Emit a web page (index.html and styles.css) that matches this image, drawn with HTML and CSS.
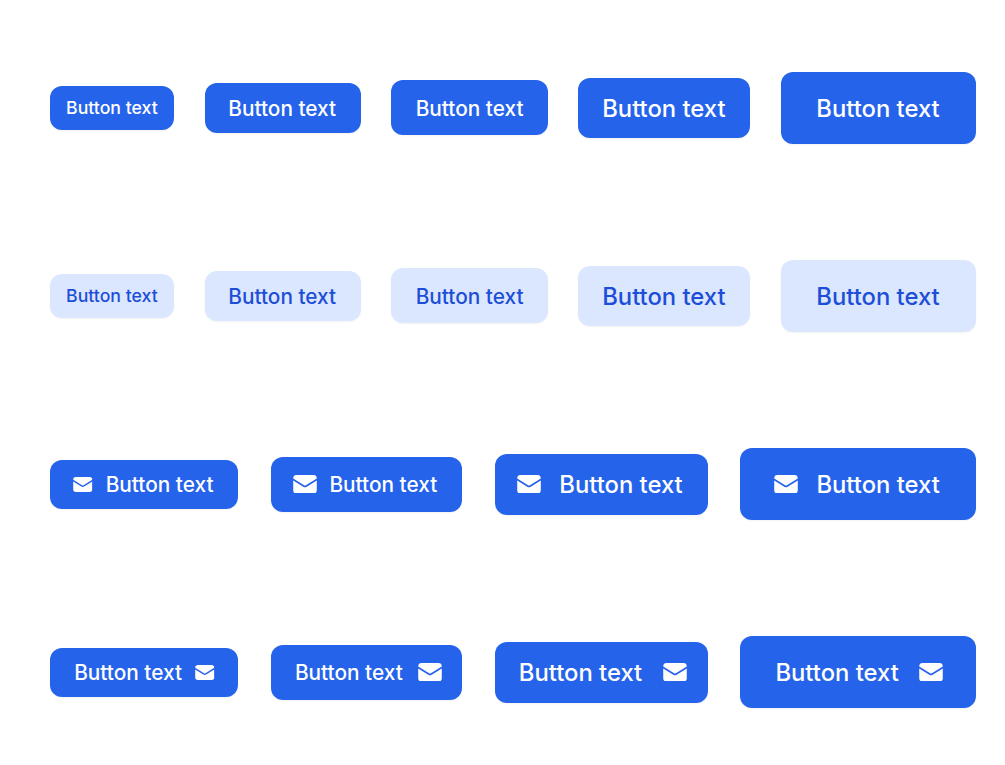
FILE: index.html
```html
<!DOCTYPE html>
<html lang="en">
<head>
  <meta charset="UTF-8" />
  <title>Buttons</title>
  <link rel="stylesheet" href="styles.css">
</head>
<body>
  <svg class="defs" width="0" height="0" aria-hidden="true">
    <symbol id="mail" viewBox="1.5 3.75 21 16.5">
      <path d="M1.5 8.67v8.58a3 3 0 003 3h15a3 3 0 003-3V8.67l-8.928 5.493a3 3 0 01-3.144 0L1.5 8.67z"/>
      <path d="M22.5 6.908V6.75a3 3 0 00-3-3h-15a3 3 0 00-3 3v.158l9.714 5.978a1.5 1.5 0 001.572 0L22.5 6.908z"/>
    </symbol>
  </svg>

  <div class="row">
    <button class="btn xs">Button text</button>
    <button class="btn sm">Button text</button>
    <button class="btn md">Button text</button>
    <button class="btn lg">Button text</button>
    <button class="btn xl">Button text</button>
  </div>

  <div class="row">
    <button class="btn soft xs">Button text</button>
    <button class="btn soft sm">Button text</button>
    <button class="btn soft md">Button text</button>
    <button class="btn soft lg">Button text</button>
    <button class="btn soft xl">Button text</button>
  </div>

  <div class="row lead">
    <button class="btn icon-sm"><svg class="icon small"><use href="#mail"/></svg>Button text</button>
    <button class="btn icon-md"><svg class="icon"><use href="#mail"/></svg>Button text</button>
    <button class="btn icon-lg"><svg class="icon"><use href="#mail"/></svg>Button text</button>
    <button class="btn icon-xl"><svg class="icon"><use href="#mail"/></svg>Button text</button>
  </div>

  <div class="row trail">
    <button class="btn icon-sm">Button text<svg class="icon small"><use href="#mail"/></svg></button>
    <button class="btn icon-md">Button text<svg class="icon"><use href="#mail"/></svg></button>
    <button class="btn icon-lg">Button text<svg class="icon"><use href="#mail"/></svg></button>
    <button class="btn icon-xl">Button text<svg class="icon"><use href="#mail"/></svg></button>
  </div>
</body>
</html>
```

FILE: styles.css
```css
html, body { margin: 0; padding: 0; background: white; }
body {
  height: 765px; box-sizing: border-box;
  padding: 72px 29px 0 49.6px;
  display: flex; flex-direction: column; gap: 116px;
  font-family: Inter, sans-serif; overflow: hidden;
}
.defs { position: absolute; }
.row {
  height: 72px;
  display: flex; align-items: center; justify-content: space-between;
}
.btn {
  display: flex; align-items: center; justify-content: center;
  padding: 0; border: none; box-sizing: border-box;
  background: #2563eb; color: white;
  font-family: inherit; font-weight: 500; white-space: nowrap;
  box-shadow: 0 1px 2px rgba(0,0,0,0.05);
}
.soft { background: #dbe7fe; color: #1d4ed8; }

.xs { width: 124.6px; height: 44px; border-radius: 12px; font-size: 17.7px; padding-bottom: 1px; }
.sm { width: 156px; height: 50px; border-radius: 12px; font-size: 20.8px; padding-right: 1px; }
.md { width: 156.6px; height: 55px; margin-bottom: 1px; padding-top: 1px; border-radius: 12px; font-size: 20.8px; }
.lg { width: 172px; height: 60px; border-radius: 12px; font-size: 23.8px; padding-right: 1px; }
.xl { width: 195px; height: 72px; border-radius: 12px; font-size: 23.8px; padding-right: 1px; }

.icon-sm { width: 188.5px; height: 49px; border-radius: 12px; font-size: 20.8px; }
.icon-md { width: 191px; height: 55px; border-radius: 12px; font-size: 20.8px; }
.icon-lg { width: 213px; height: 61px; border-radius: 12px; font-size: 23.8px; }
.icon-xl { width: 235.8px; height: 72px; border-radius: 12px; font-size: 23.8px; }

/* icon before the label */
.lead .btn { padding-right: 2px; }
.lead .icon-sm { gap: 13px; padding-right: 1px; }
.lead .icon-md { gap: 12px; }
.lead .icon-lg { gap: 18px; }
.lead .icon-xl { gap: 18px; }

/* icon after the label */
.trail .icon-sm { gap: 13px; padding-left: 1px; }
.trail .icon-md { gap: 15px; padding-left: 4px; }
.trail .icon-lg { gap: 21px; padding-left: 4px; }
.trail .icon-xl { gap: 20px; padding-left: 2px; }

.icon { width: 24px; height: 18.5px; fill: white; flex: none; }
.icon.small { width: 19.5px; height: 15px; }
```
